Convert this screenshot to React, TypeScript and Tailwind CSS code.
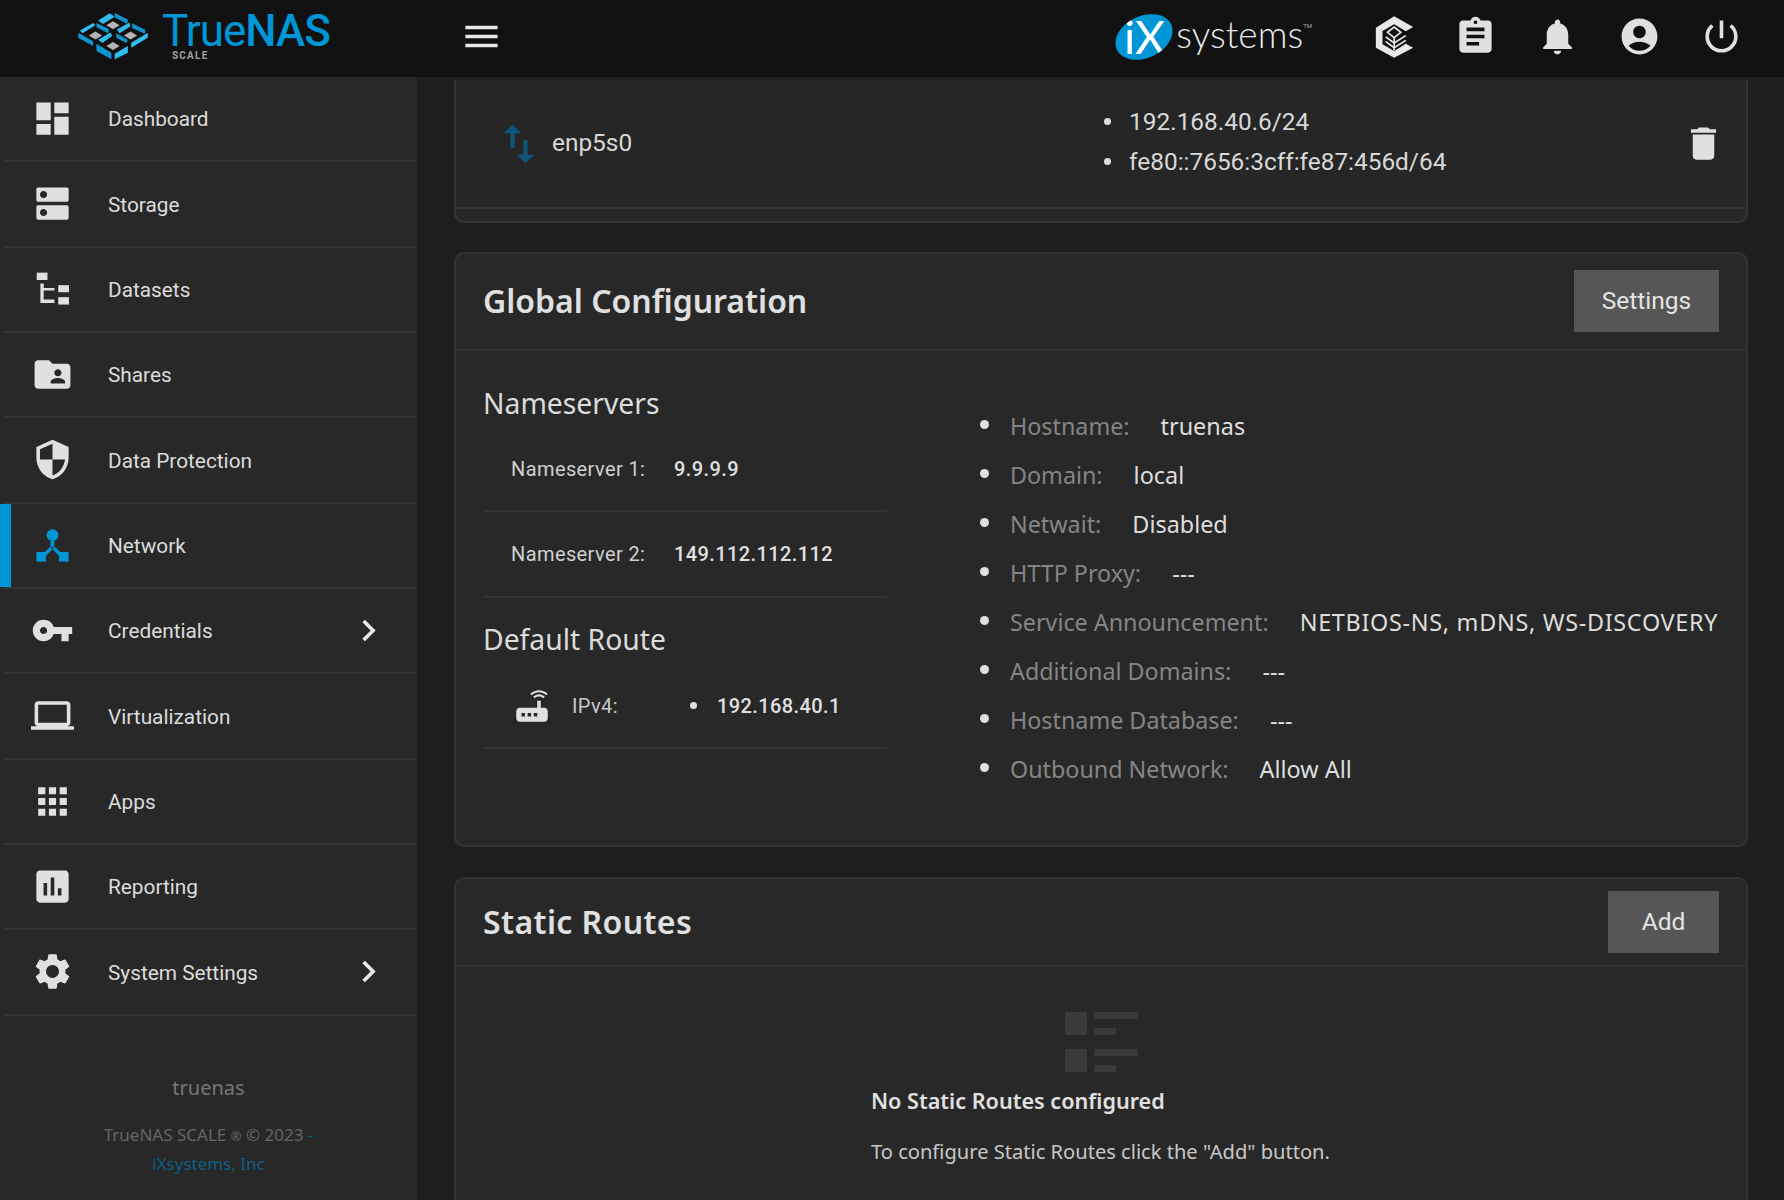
import React from "react";
import {
  MdDashboard, MdDns, MdFolderShared, MdSecurity, MdVpnKey, MdLaptop, MdApps, MdAssessment, MdSettings,
  MdChevronRight, MdMenu, MdAssignment, MdNotifications, MdAccountCircle, MdPowerSettingsNew, MdDelete, MdRouter, MdSwapVert,
} from "react-icons/md";

const DatasetsIcon = ({ className }: { className?: string }) => (
  <svg viewBox="0 0 24 24" className={className} fill="currentColor">
    <rect x="3.2" y="2.6" width="6" height="4.1" />
    <path d="M5.25 8.6h1.85v2.5h6v1.5h-6v5h6v1.9H5.25z" />
    <rect x="15.2" y="9.6" width="6" height="3.9" />
    <rect x="15.2" y="16.3" width="6" height="4.1" />
  </svg>
);

const NetworkIcon = ({ className }: { className?: string }) => (
  <svg viewBox="0 0 24 24" className={className} fill="currentColor">
    <circle cx="12" cy="6.2" r="3.3" />
    <rect x="11" y="8" width="2" height="5" />
    <path d="M12 11.4l1.4 1.3-5 5-1.4-1.4zM12 11.4l-1.4 1.3 5 5 1.4-1.4z" />
    <rect x="3" y="15.6" width="5.4" height="5.4" />
    <rect x="15.6" y="15.6" width="5.4" height="5.4" />
  </svg>
);

const EmptyIcon = () => (
  <svg viewBox="0 0 73 60" className="h-[60px] w-[73px]" fill="#3a3a3a">
    <rect x="0" y="0" width="22" height="23" />
    <rect x="29" y="0" width="44" height="7" />
    <rect x="29" y="16" width="22" height="7" />
    <rect x="0" y="37" width="22" height="23" />
    <rect x="29" y="37" width="44" height="7" />
    <rect x="29" y="53" width="22" height="7" />
  </svg>
);

const TrueNasMark = () => (
  <svg viewBox="55 22 210 145" className="h-[48px] w-[70px] shrink-0">
    <g fill="#31bdf0">
      <polygon points="115,48 150,26 165,36 130,58" />
      <polygon points="60,78 100,55 107,62 68,86" />
      <polygon points="172,75 210,54 212,66 180,86" />
      <polygon points="115,106 152,84 158,94 128,116" />
      <polygon points="165,148 205,125 205,145 165,165" />
      <polygon points="215,115 265,85 265,100 215,130" />
    </g>
    <g fill="#0f94cf">
      <polygon points="165,25 205,45 203,58 165,38" />
      <polygon points="110,55 148,74 146,86 110,68" />
      <polygon points="218,56 258,76 256,88 218,70" />
      <polygon points="170,86 205,106 200,116 170,100" />
      <polygon points="55,85 100,110 100,125 55,100" />
      <polygon points="110,118 155,145 155,165 110,140" />
    </g>
    <g fill="#b5b5b5">
      <polygon points="160,50 180,62 160,74 140,62" />
      <polygon points="107,81 127,93 107,105 87,93" />
      <polygon points="213,81 233,93 213,105 193,93" />
      <polygon points="160,113 180,125 160,137 140,125" />
    </g>
  </svg>
);

const TrueCommandIcon = () => (
  <svg viewBox="25 24 122 132" className="h-[44px] w-[41px] shrink-0">
    <polygon fill="#e8e8e8" points="85,28 142,60 120,73 85,52 50,72 50,112 85,132 120,110 142,122 85,152 30,122 30,62" />
    <g fill="none" stroke="#e8e8e8" strokeWidth="5">
      <path d="M85 60L105 76 85 92 65 76z" />
      <path d="M85 92V130" />
      <path d="M60 90L85 108 120 86" />
      <path d="M60 104L85 122 120 100" />
    </g>
  </svg>
);

const navItems: { label: string; Icon: React.ComponentType<{ className?: string }>; chevron?: boolean; active?: boolean }[] = [
  { label: "Dashboard", Icon: MdDashboard },
  { label: "Storage", Icon: MdDns },
  { label: "Datasets", Icon: DatasetsIcon },
  { label: "Shares", Icon: MdFolderShared },
  { label: "Data Protection", Icon: MdSecurity },
  { label: "Network", Icon: NetworkIcon, active: true },
  { label: "Credentials", Icon: MdVpnKey, chevron: true },
  { label: "Virtualization", Icon: MdLaptop },
  { label: "Apps", Icon: MdApps },
  { label: "Reporting", Icon: MdAssessment },
  { label: "System Settings", Icon: MdSettings, chevron: true },
];

const globalInfo = [
  ["Hostname:", "truenas"],
  ["Domain:", "local"],
  ["Netwait:", "Disabled"],
  ["HTTP Proxy:", "---"],
  ["Service Announcement:", "NETBIOS-NS, mDNS, WS-DISCOVERY"],
  ["Additional Domains:", "---"],
  ["Hostname Database:", "---"],
  ["Outbound Network:", "Allow All"],
];

const TITLE = "font-['Noto_Sans','Open_Sans',sans-serif]";

export default function App() {
  return (
    <div className="flex h-[1200px] w-[1784px] flex-col overflow-hidden bg-[#1e1e1e] font-['Roboto',sans-serif] text-[#e0e0e0]">
      <header className="flex h-[77px] shrink-0 items-center bg-[#111111] pb-[4px]">
        <div className="ml-[78px] flex w-[387px] items-start">
          <TrueNasMark />
          <div className="ml-[14px] flex flex-col">
            <div className="font-['Roboto',sans-serif] text-[44px] leading-[38px] tracking-[-0.95px] text-[#0095d5]">
              True<span className="font-medium">NAS</span>
            </div>
            <div className="ml-[10px] text-[10px] font-bold leading-[12px] tracking-[1.2px] text-[#a0a0a0]">SCALE</div>
          </div>
        </div>
        <MdMenu className="h-[43px] w-[43px] -translate-x-[5px] text-[#e8e8e8]" />
        <div className="ml-auto flex items-center">
          <div className="relative mr-[62px] flex items-center">
            <div className="relative flex h-[42px] w-[60px] -rotate-[25deg] items-center justify-center overflow-hidden rounded-[50%] bg-[#0095d5]">
              <span className="rotate-[25deg] font-['Lato',sans-serif] text-[46px] font-normal leading-none text-white">iX</span>
            </div>
            <span className="ml-[2px] -translate-y-[3px] font-['Lato',sans-serif] text-[37px] font-light leading-none text-[#e8e8e8]">systems</span>
            <span className="mb-[22px] text-[6px] text-[#aaaaaa]">TM</span>
          </div>
          <div className="flex items-center gap-[39px] pr-[41px]">
            <TrueCommandIcon />
            <MdAssignment className="h-[43px] w-[43px] text-[#e0e0e0]" />
            <MdNotifications className="h-[43px] w-[43px] text-[#e0e0e0]" />
            <MdAccountCircle className="h-[43px] w-[43px] text-[#e0e0e0]" />
            <MdPowerSettingsNew className="h-[43px] w-[43px] text-[#e0e0e0]" />
          </div>
        </div>
      </header>

      <div className="flex min-h-0 flex-1">
        <aside className="flex w-[417px] shrink-0 flex-col bg-[#282828]">
          <nav className="flex flex-col">
            {navItems.map(({ label, Icon, chevron, active }) => (
              <div key={label} className="ml-[3px] flex h-[85.33px] items-center border-b-2 border-[#333333]">
                <span className={`-ml-[3px] h-full w-[11px] shrink-0 ${active ? "bg-[#0095d5]" : ""}`} />
                <Icon className={`ml-[20px] h-[43px] w-[43px] shrink-0 ${active ? "text-[#0095d5]" : "text-[#e0e0e0]"}`} />
                <span className="ml-[34px] pt-[2px] text-[20.8px] leading-none text-[#dcdcdc]">{label}</span>
                {chevron && <MdChevronRight className="ml-auto mr-[27px] h-[43px] w-[43px] text-[#e8e8e8]" />}
              </div>
            ))}
          </nav>
          <div className={`mt-[62px] text-center ${TITLE} text-[20px] leading-none text-[#777777]`}>truenas</div>
          <div className={`mt-[23px] text-center ${TITLE} text-[17px] leading-[28.4px] text-[#666666]`}>
            <div>TrueNAS SCALE <span className="text-[13px]">®</span> © 2023 <span className="text-[#0f5f85]">-</span></div>
            <div className="text-[#0f5f85]">iXsystems, Inc</div>
          </div>
        </aside>

        <main className="flex min-w-0 flex-1 flex-col overflow-hidden pl-[37px] pr-[36px] pt-[3px]">
          <section className="shrink-0 rounded-b-[10px] border-x-2 border-b-2 border-[#363636] bg-[#262626]">
            <div className="flex h-[129px] items-center border-b-2 border-[#363636]">
              <MdSwapVert className="ml-[37px] h-[52px] w-[52px] shrink-0 text-[#0f5577]" />
              <span className="ml-[7px] text-[24.4px] text-[#d8d8d8]">enp5s0</span>
              <ul className="ml-[472px] flex flex-col gap-[13px] pb-[4px] text-[24.4px] leading-[27px] text-[#d8d8d8]">
                <li className="flex items-center"><span className="mr-[18px] h-[7px] w-[7px] rounded-full bg-[#e0e0e0]" />192.168.40.6/24</li>
                <li className="flex items-center"><span className="mr-[18px] h-[7px] w-[7px] rounded-full bg-[#e0e0e0]" />fe80::7656:3cff:fe87:456d/64</li>
              </ul>
              <MdDelete className="ml-auto mr-[21px] h-[43px] w-[43px] text-[#e0e0e0]" />
            </div>
            <div className="h-[12px]" />
          </section>

          <section className="mt-[28.5px] shrink-0 rounded-[10px] border-2 border-[#333333] bg-[#282828]">
            <div className="flex h-[97px] items-center justify-between border-b-2 border-[#333333] pl-[27px] pr-[27px]">
              <h2 className={`${TITLE} text-[32px] font-semibold leading-none text-[#e0e0e0]`}>Global Configuration</h2>
              <button className="flex h-[62px] w-[145px] items-center justify-center bg-[#565656] text-[24.5px] text-[#e4e4e4]">Settings</button>
            </div>
            <div className="flex pb-[51.5px] pl-[27px] pr-[27px]">
              <div className="w-[404px] shrink-0 pt-[29.5px]">
                <h3 className={`flex h-[47px] items-center ${TITLE} text-[28.3px] font-normal leading-none text-[#dcdcdc]`}>Nameservers</h3>
                <div className="flex h-[85px] items-center border-b-2 border-[#333333] pl-[28px] text-[20px] tracking-[0.4px]">
                  <span className="w-[163px] text-[#d0d0d0]">Nameserver 1:</span>
                  <span className="font-medium text-[#e0e0e0]">9.9.9.9</span>
                </div>
                <div className="flex h-[86px] items-center border-b-2 border-[#333333] pl-[28px] text-[20px] tracking-[0.4px]">
                  <span className="w-[163px] text-[#d0d0d0]">Nameserver 2:</span>
                  <span className="font-medium text-[#e0e0e0]">149.112.112.112</span>
                </div>
                <h3 className={`mb-[2px] mt-[18px] flex h-[46px] items-center ${TITLE} text-[28.3px] font-normal leading-none text-[#dcdcdc]`}>Default Route</h3>
                <div className="flex h-[85px] items-center border-b-2 border-[#333333] pl-[28px] text-[20px] tracking-[0.4px]">
                  <MdRouter className="h-[42px] w-[42px] shrink-0 text-[#e0e0e0]" />
                  <span className="ml-[19px] w-[118px] text-[#c8c8c8]">IPv4:</span>
                  <span className="mr-[20px] h-[7px] w-[7px] rounded-full bg-[#e0e0e0]" />
                  <span className="font-medium text-[#e0e0e0]">192.168.40.1</span>
                </div>
              </div>
              <ul className={`ml-[93px] flex flex-col pt-[52px] ${TITLE}`}>
                {globalInfo.map(([k, v]) => (
                  <li key={k} className="flex h-[48.9px] items-center whitespace-nowrap">
                    <span className="mr-[21px] h-[9px] w-[9px] -translate-y-[2px] rounded-full bg-[#e0e0e0]" />
                    <span className="text-[23.3px] text-[#858585]">{k}</span>
                    <span className={`ml-[31px] text-[23.4px] text-[#dedede] ${v.length > 20 ? "tracking-[0.7px]" : ""}`}>{v}</span>
                  </li>
                ))}
              </ul>
            </div>
          </section>

          <section className="mt-[30px] flex-1 rounded-t-[10px] border-x-2 border-t-2 border-[#333333] bg-[#282828]">
            <div className="flex h-[88px] items-center justify-between border-b-2 border-[#333333] pl-[27px] pr-[27px]">
              <h2 className={`${TITLE} text-[32px] font-semibold leading-none tracking-[0.4px] text-[#e0e0e0]`}>Static Routes</h2>
              <button className="flex h-[62px] w-[111px] items-center justify-center bg-[#565656] text-[24.5px] text-[#e4e4e4]">Add</button>
            </div>
            <div className="flex flex-col items-center pt-[45px]">
              <div className="flex w-[460px] flex-col">
                <div className="flex justify-center"><EmptyIcon /></div>
                <h4 className={`mt-[16px] ${TITLE} text-[21.6px] font-semibold leading-[26px] text-[#e0e0e0]`}>No Static Routes configured</h4>
                <p className={`mt-[25px] ${TITLE} text-[20.1px] leading-[26px] text-[#c8c8c8]`}>To configure Static Routes click the "Add" button.</p>
              </div>
            </div>
          </section>
        </main>
      </div>
    </div>
  );
}
